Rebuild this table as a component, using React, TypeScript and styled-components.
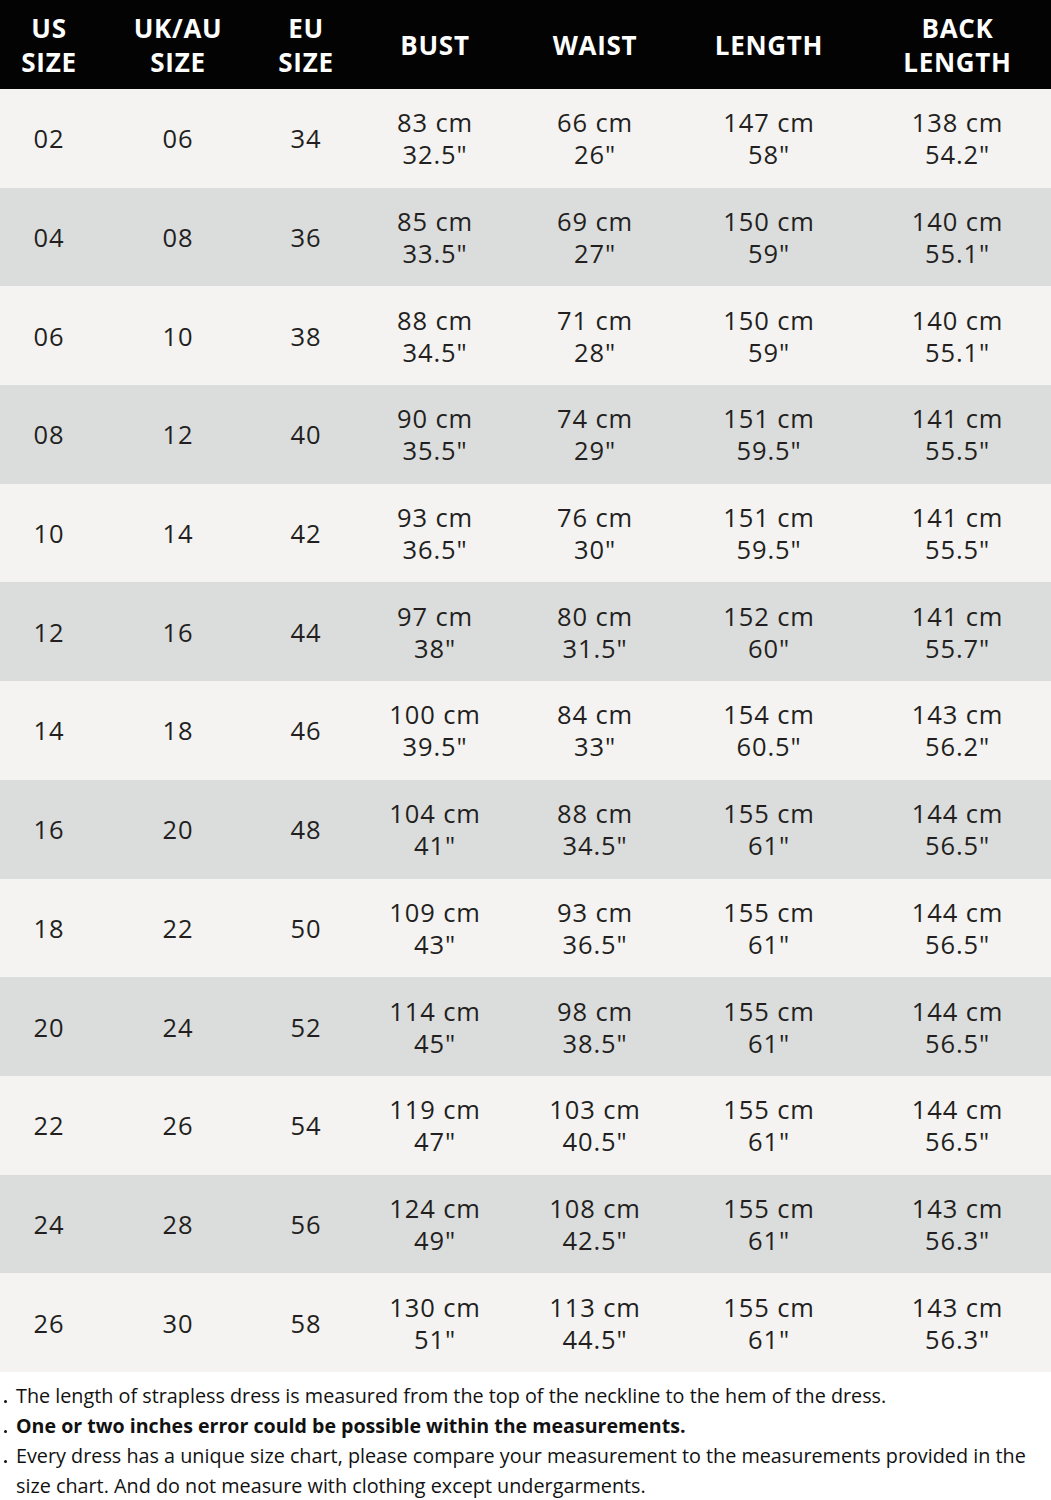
import React from "react";
import styled, { createGlobalStyle } from "styled-components";

const Global = createGlobalStyle`
  html, body { margin: 0; padding: 0; background: #ffffff; }
  body { font-family: "Open Sans", "Noto Sans", "Liberation Sans", sans-serif; }
`;

const COLS = "98px 160px 96px 162px 158px 190px 187px";

const Page = styled.div`
  width: 1051px;
  display: flex;
  flex-direction: column;
`;

const HeaderRow = styled.div`
  display: grid;
  grid-template-columns: ${COLS};
  height: 89px;
  background: #030303;
`;

const HeadCell = styled.div`
  display: flex;
  align-items: center;
  justify-content: center;
  text-align: center;
  color: #ffffff;
  font-weight: 700;
  font-size: 26px;
  line-height: 34px;
  letter-spacing: 0.7px;
`;

const Row = styled.div<{ $alt: boolean }>`
  display: grid;
  grid-template-columns: ${COLS};
  height: 98.7px;
  background: ${(p) => (p.$alt ? "#dbdcdc" : "#f4f3f2")};
`;

const Cell = styled.div`
  display: flex;
  flex-direction: column;
  align-items: center;
  justify-content: center;
  text-align: center;
  color: #231f20;
  font-size: 25.5px;
  line-height: 32px;
  letter-spacing: 0.9px;
`;

const Notes = styled.div`
  padding: 9px 0 0 0;
  display: flex;
  flex-direction: column;
`;

const Note = styled.div<{ $bold?: boolean }>`
  position: relative;
  padding-left: 16px;
  padding-right: 8px;
  font-size: ${(p) => (p.$bold ? "19.6px" : "19.8px")};
  line-height: 30px;
  color: #111;
  font-weight: ${(p) => (p.$bold ? 700 : 400)};
  letter-spacing: 0;
`;

const Dot = styled.span`
  position: absolute;
  left: 4px;
  top: 19px;
  width: 3px;
  height: 3px;
  background: #111;
  border-radius: 50%;
`;

const headers = [
  ["US", "SIZE"],
  ["UK/AU", "SIZE"],
  ["EU", "SIZE"],
  ["BUST"],
  ["WAIST"],
  ["LENGTH"],
  ["BACK", "LENGTH"],
];

type R = [string, string, string, [string, string], [string, string], [string, string], [string, string]];

const rows: R[] = [
  ["02", "06", "34", ["83 cm", '32.5"'], ["66 cm", '26"'], ["147 cm", '58"'], ["138 cm", '54.2"']],
  ["04", "08", "36", ["85 cm", '33.5"'], ["69 cm", '27"'], ["150 cm", '59"'], ["140 cm", '55.1"']],
  ["06", "10", "38", ["88 cm", '34.5"'], ["71 cm", '28"'], ["150 cm", '59"'], ["140 cm", '55.1"']],
  ["08", "12", "40", ["90 cm", '35.5"'], ["74 cm", '29"'], ["151 cm", '59.5"'], ["141 cm", '55.5"']],
  ["10", "14", "42", ["93 cm", '36.5"'], ["76 cm", '30"'], ["151 cm", '59.5"'], ["141 cm", '55.5"']],
  ["12", "16", "44", ["97 cm", '38"'], ["80 cm", '31.5"'], ["152 cm", '60"'], ["141 cm", '55.7"']],
  ["14", "18", "46", ["100 cm", '39.5"'], ["84 cm", '33"'], ["154 cm", '60.5"'], ["143 cm", '56.2"']],
  ["16", "20", "48", ["104 cm", '41"'], ["88 cm", '34.5"'], ["155 cm", '61"'], ["144 cm", '56.5"']],
  ["18", "22", "50", ["109 cm", '43"'], ["93 cm", '36.5"'], ["155 cm", '61"'], ["144 cm", '56.5"']],
  ["20", "24", "52", ["114 cm", '45"'], ["98 cm", '38.5"'], ["155 cm", '61"'], ["144 cm", '56.5"']],
  ["22", "26", "54", ["119 cm", '47"'], ["103 cm", '40.5"'], ["155 cm", '61"'], ["144 cm", '56.5"']],
  ["24", "28", "56", ["124 cm", '49"'], ["108 cm", '42.5"'], ["155 cm", '61"'], ["143 cm", '56.3"']],
  ["26", "30", "58", ["130 cm", '51"'], ["113 cm", '44.5"'], ["155 cm", '61"'], ["143 cm", '56.3"']],
];

export default function App() {
  return (
    <Page>
      <Global />
      <HeaderRow>
        {headers.map((h, i) => (
          <HeadCell key={i}>
            {h.length === 2 ? (
              <span>
                {h[0]}
                <br />
                {h[1]}
              </span>
            ) : (
              h[0]
            )}
          </HeadCell>
        ))}
      </HeaderRow>
      {rows.map((r, i) => (
        <Row key={i} $alt={i % 2 === 1}>
          <Cell>{r[0]}</Cell>
          <Cell>{r[1]}</Cell>
          <Cell>{r[2]}</Cell>
          {[r[3], r[4], r[5], r[6]].map((v, j) => (
            <Cell key={j}>
              <span>{v[0]}</span>
              <span>{v[1]}</span>
            </Cell>
          ))}
        </Row>
      ))}
      <Notes>
        <Note>
          <Dot />
          The length of strapless dress is measured from the top of the neckline to the hem of the dress.
        </Note>
        <Note $bold>
          <Dot />
          One or two inches error could be possible within the measurements.
        </Note>
        <Note>
          <Dot />
          Every dress has a unique size chart, please compare your measurement to the measurements provided in the size chart. And do not measure with clothing except undergarments.
        </Note>
      </Notes>
    </Page>
  );
}
